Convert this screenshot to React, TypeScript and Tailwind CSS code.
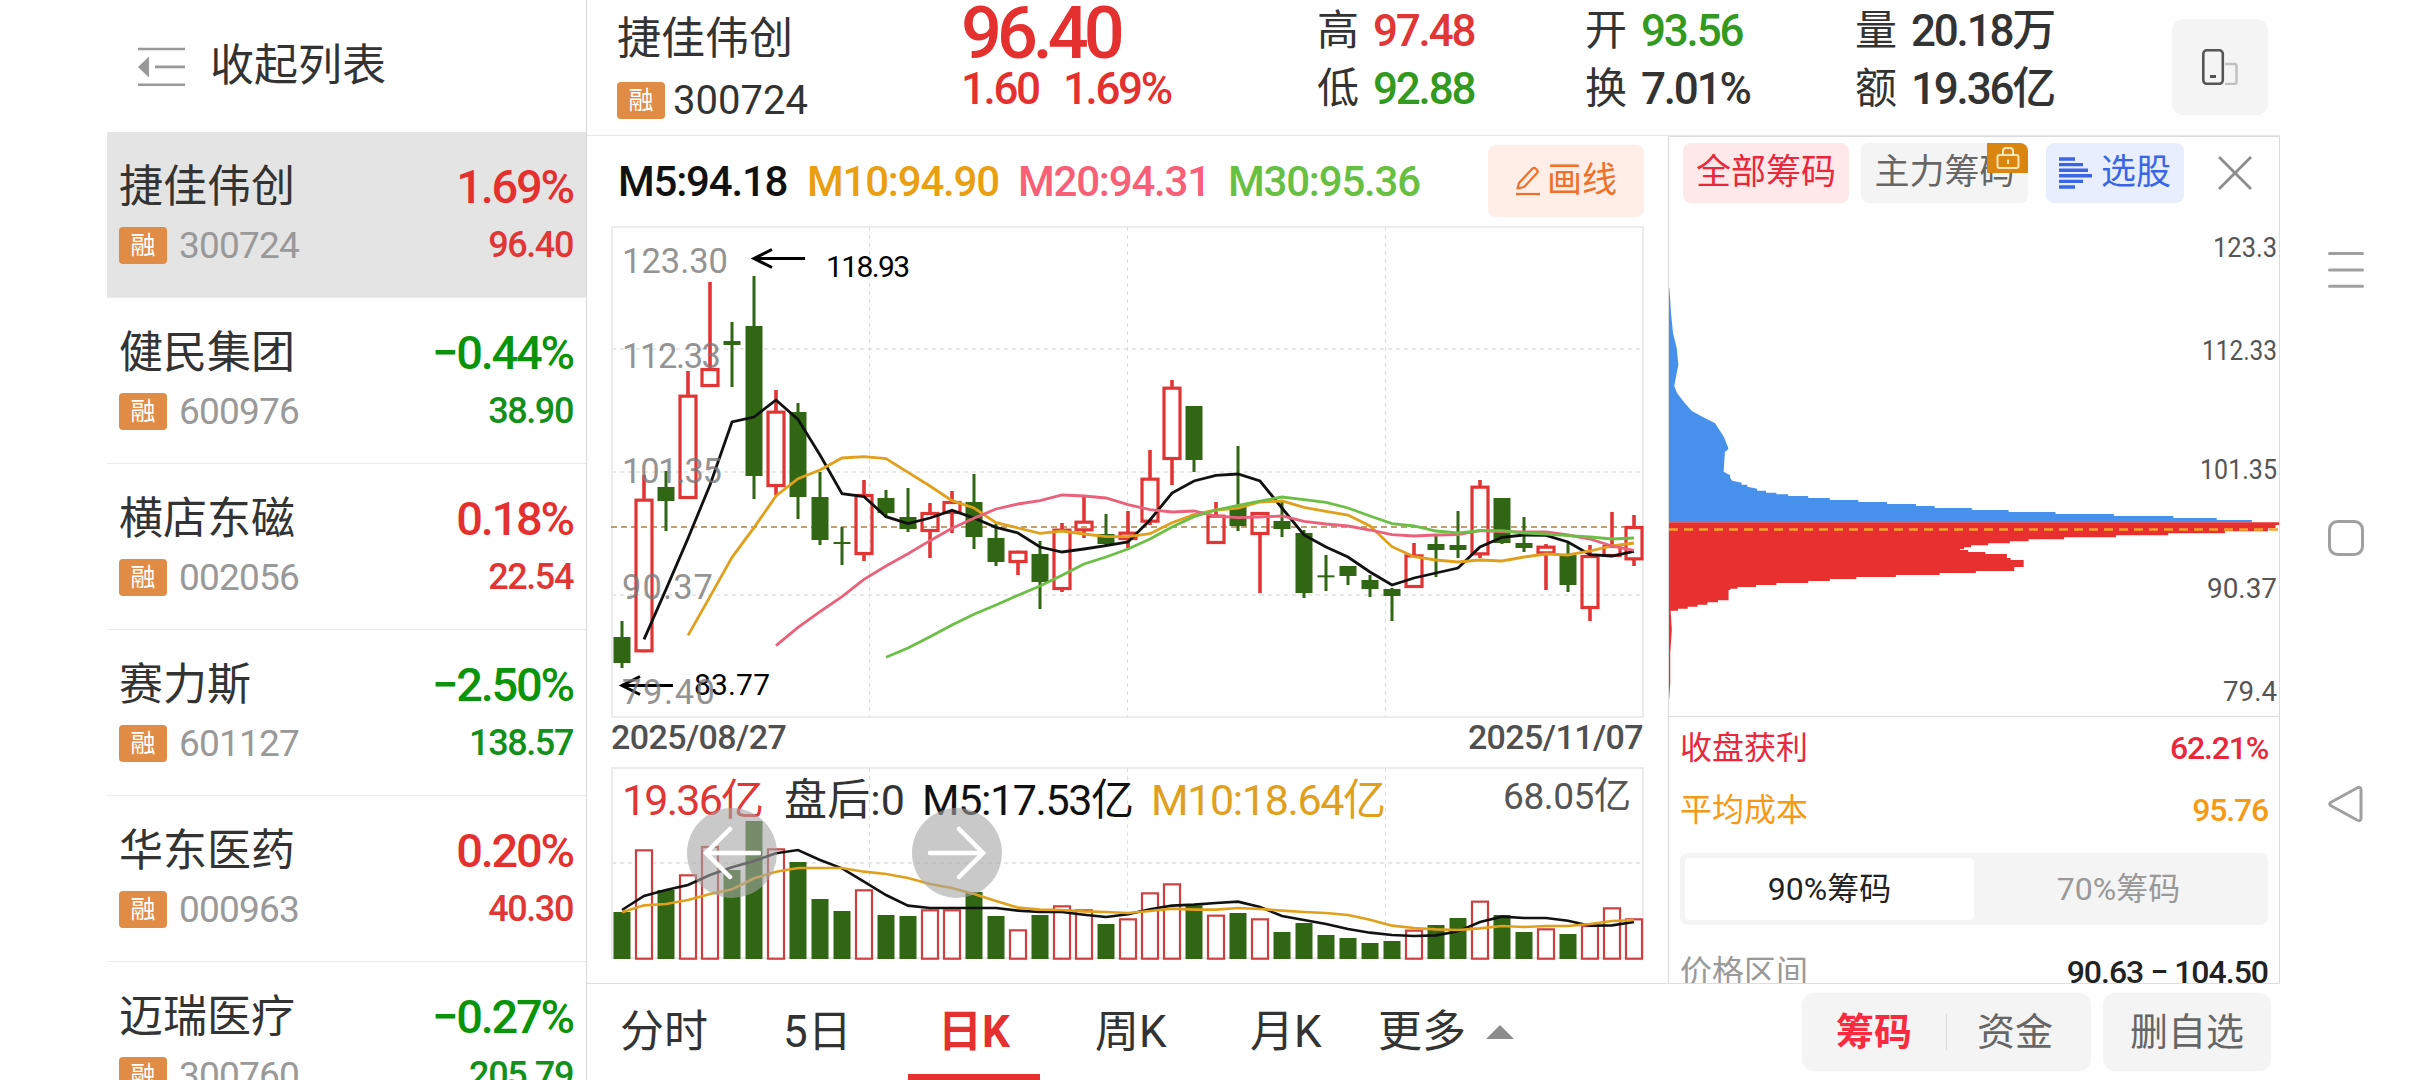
import React from 'react';
import clsx from 'clsx';

interface Stock {
  name: string;
  code: string;
  change: string;
  price: string;
  up: boolean;
}

// up, high, open/close top, open/close bottom, low, volume top
type Candle = [boolean, number, number, number, number, number];

const STOCKS: Stock[] = [
  { name: '捷佳伟创', code: '300724', change: '1.69%', price: '96.40', up: true },
  { name: '健民集团', code: '600976', change: '−0.44%', price: '38.90', up: false },
  { name: '横店东磁', code: '002056', change: '0.18%', price: '22.54', up: true },
  { name: '赛力斯', code: '601127', change: '−2.50%', price: '138.57', up: false },
  { name: '华东医药', code: '000963', change: '0.20%', price: '40.30', up: true },
  { name: '迈瑞医疗', code: '300760', change: '−0.27%', price: '205.79', up: false },
];

const U = true;
const D = false;

const CANDLES: Candle[] = [
  [D, 1203, 1251, 1329, 1344, 636], [U, 765, 836, 1297, 1297, 448], [D, 753, 801, 843, 933, 570],
  [U, 453, 524, 837, 837, 523], [U, 186, 444, 501, 501, 438], [D, 306, 363, 375, 501, 510],
  [D, 168, 318, 768, 837, 363], [U, 510, 572, 801, 826, 445], [D, 549, 576, 831, 897, 486],
  [D, 756, 831, 960, 975, 597], [D, 921, 966, 972, 1035, 633], [U, 780, 822, 1005, 1023, 568],
  [D, 810, 834, 879, 888, 645], [D, 804, 891, 927, 936, 648], [U, 849, 876, 936, 1014, 628],
  [U, 813, 843, 882, 939, 628], [D, 762, 846, 951, 987, 576], [D, 912, 954, 1026, 1038, 648],
  [U, 992, 992, 1029, 1065, 688], [D, 963, 1002, 1086, 1167, 645], [U, 909, 926, 1110, 1116, 616],
  [U, 831, 902, 934, 954, 628], [D, 882, 942, 972, 975, 672], [U, 873, 935, 960, 984, 655],
  [U, 690, 773, 908, 915, 577], [U, 480, 500, 720, 795, 550], [D, 558, 558, 720, 756, 616],
  [U, 846, 884, 972, 972, 644], [D, 678, 858, 918, 933, 639], [U, 876, 876, 945, 1119, 655],
  [D, 846, 903, 927, 951, 696], [D, 930, 939, 1119, 1134, 669], [D, 1005, 1066, 1072, 1113, 705],
  [D, 1038, 1038, 1068, 1095, 714], [D, 1065, 1080, 1107, 1131, 729], [D, 1104, 1107, 1128, 1203, 723],
  [U, 969, 1003, 1104, 1104, 689], [D, 948, 972, 990, 1071, 675], [D, 873, 975, 990, 1014, 654],
  [U, 780, 797, 1006, 1014, 602], [D, 834, 834, 969, 972, 645], [D, 891, 969, 984, 996, 696],
  [U, 972, 977, 1003, 1110, 685], [D, 966, 1005, 1095, 1116, 702], [U, 975, 1005, 1167, 1203, 675],
  [U, 876, 975, 1011, 1011, 622], [U, 885, 918, 1021, 1038, 655],
];

const MA = [
  { color: '#111111', start: 1, data: [1258, 1108, 955, 795, 606, 591, 540, 598, 705, 821, 830, 890, 911, 894, 871, 894, 922, 939, 981, 996, 987, 977, 966, 900, 819, 783, 766, 762, 783, 864, 945, 981, 1011, 1056, 1095, 1074, 1059, 1044, 981, 952, 945, 946, 966, 1004, 1008, 994] },
  { color: '#e0a01c', start: 3, data: [1246, 1130, 1012, 923, 828, 776, 750, 714, 710, 716, 757, 798, 842, 864, 908, 924, 940, 933, 942, 950, 950, 941, 908, 884, 870, 864, 846, 843, 862, 874, 885, 918, 980, 1010, 1020, 1026, 1020, 1023, 1011, 1002, 1005, 993, 978, 969] },
  { color: '#e9617a', start: 7, data: [1277, 1222, 1175, 1130, 1078, 1038, 1001, 962, 925, 895, 867, 852, 842, 825, 828, 834, 854, 869, 876, 873, 888, 893, 891, 888, 904, 912, 918, 930, 944, 948, 945, 944, 932, 935, 936, 936, 945, 957, 978, 991] },
  { color: '#6cbf45', start: 12, data: [1312, 1284, 1250, 1215, 1183, 1155, 1126, 1098, 1066, 1032, 1011, 987, 957, 921, 890, 870, 856, 843, 831, 839, 847, 864, 888, 911, 918, 933, 939, 932, 932, 939, 942, 947, 951, 957, 954] },
];

const VOL_MA = [
  { color: '#111111', start: 0, data: [630, 588, 570, 555, 525, 502, 483, 460, 450, 480, 505, 545, 585, 617, 624, 624, 624, 624, 632, 636, 636, 644, 651, 643, 628, 617, 614, 609, 605, 621, 648, 660, 672, 687, 698, 705, 708, 706, 694, 666, 650, 654, 654, 662, 677, 676, 666] },
  { color: '#e0a01c', start: 0, data: [637, 616, 612, 600, 582, 568, 535, 515, 504, 504, 504, 515, 522, 534, 552, 564, 582, 603, 623, 629, 630, 634, 636, 639, 633, 626, 629, 629, 624, 627, 632, 636, 639, 645, 659, 677, 684, 688, 690, 685, 678, 681, 678, 678, 672, 663, 660] },
];

const AXIS_LABELS: [string, number, number][] = [
  ['123.30', 273, 106],
  ['112.33', 368, 99],
  ['101.35', 483, 100],
  ['90.37', 599, 91],
  ['79.40', 704, 93],
];

const PROFILE_LABELS: [string, number, number][] = [
  ['123.3', 257, 64],
  ['112.33', 360, 75],
  ['101.35', 479, 77],
  ['90.37', 598, 70],
  ['79.4', 701, 54],
];

// cost distribution outline: smooth parts first, then [width, y] steps
const BLUE_CURVE = '23,265 27,340 32,400 41,445 45,495 40,525 35,558 42,580 60,608 78,633 105,651 135,670 157,712 167,743 167,748 159,756 156,815 172,826 172,834 177,842 200,848 200,854 214,854 214,860 238,866 238,872 260,872';
const BLUE_STEPS: [number, number][] = [
  [260, 878], [285, 883], [314, 888], [363, 894], [416, 900], [486, 906], [556, 912], [627, 918], [673, 924],
  [764, 930], [854, 936], [969, 942], [1112, 948], [1258, 954], [1364, 960], [1450, 967],
];
const RED_STEPS: [number, number][] = [
  [1517, 975], [1508, 985], [1490, 994], [1384, 1000], [1245, 1006], [1117, 1012], [990, 1018], [903, 1024],
  [857, 1030], [804, 1036], [762, 1042], [745, 1047], [735, 1050], [755, 1056], [797, 1062], [850, 1074],
  [859, 1080], [891, 1101], [868, 1113], [774, 1119], [685, 1125], [578, 1131], [481, 1137], [416, 1143],
  [363, 1149], [285, 1155], [235, 1161], [190, 1166], [172, 1170], [168, 1201], [142, 1207], [116, 1214],
  [92, 1220], [68, 1226], [44, 1232],
];

const RED = '#e13535';
const GREEN = '#306614';

const candleX = (i: number) => 622 + i * 22;
const priceY = (v: number) => 220 + v / 3;
const volumeY = (v: number) => 700 + v / 3;

const linePoints = (data: number[], start: number, toY: (v: number) => number) =>
  data.map((v, i) => `${candleX(start + i)},${toY(v)}`).join(' ');

const stepPoints = (steps: [number, number][], top: number) => {
  let y = top;
  return steps
    .map(([x, next]) => {
      const part = `${x},${y} ${x},${next}`;
      y = next;
      return part;
    })
    .join(' ');
};

const Badge: React.FC = () => (
  <span className="flex h-[37px] w-12 shrink-0 items-center justify-center rounded bg-[#e18c46] text-[25px] text-white">融</span>
);

const Sidebar: React.FC = () => (
  <aside className="flex w-[480px] shrink-0 flex-col overflow-hidden border-r border-[#d8d8d8]">
    <div className="flex h-[132px] shrink-0 items-center pl-[31px]">
      <svg className="h-[39px] w-12" viewBox="0 0 48 39" fill="none" stroke="#999" strokeWidth="2.7">
        <path d="M0 2h47M17 19.9h30M0 37.8h47" />
        <path d="M0 19.9 11 9.5v21z" fill="#999" stroke="none" />
      </svg>
      <span className="ml-[24px] text-[44px] leading-[44px] text-[#333]">收起列表</span>
    </div>
    {STOCKS.map((s, i) => (
      <div
        key={s.code}
        className={clsx(
          'flex h-[166px] shrink-0 flex-col border-b border-[#ebebeb] pl-3 pr-[13px] pt-8',
          i === 0 && 'bg-[#e4e4e4]'
        )}
      >
        <div className="flex items-center justify-between">
          <span className="text-[44px] leading-[46px] text-[#333]">{s.name}</span>
          <span className={clsx('text-[47px] leading-[46px] font-medium tracking-[-2.2px]', s.up ? 'text-[#e53030]' : 'text-[#0a940a]')}>
            {s.change}
          </span>
        </div>
        <div className="mt-[17px] flex items-center">
          <Badge />
          <span className="ml-3 text-[37px] leading-[37px] tracking-[-0.8px] text-[#999]">{s.code}</span>
          <span className={clsx('ml-auto text-[36px] leading-[37px] font-medium tracking-[-1.4px]', s.up ? 'text-[#e03636]' : 'text-[#12901a]')}>
            {s.price}
          </span>
        </div>
      </div>
    ))}
  </aside>
);

interface StatProps {
  label: string;
  value: string;
  className?: string;
}

const Stat: React.FC<StatProps> = ({ label, value, className }) => (
  <div className="flex items-center leading-[44px]">
    <span className="w-[56px] text-[42px] text-[#333]">{label}</span>
    <span className={clsx('text-[44px] font-medium tracking-[-2.2px]', className)}>{value}</span>
  </div>
);

const Header: React.FC = () => (
  <header className="flex h-[136px] shrink-0 border-b border-[#e8e8e8] pl-[30px] text-[#333]">
    <div className="w-[344px] pt-[17px]">
      <div className="text-[44px] leading-[44px]">捷佳伟创</div>
      <div className="mt-[21px] flex items-center">
        <Badge />
        <span className="ml-2 text-[40px] leading-[37px]">300724</span>
      </div>
    </div>
    <div className="w-[356px] font-medium text-[#e53030]">
      <div className="text-[72px] leading-[67px] tracking-[-5px]">96.40</div>
      <div className="flex text-[44px] leading-[44px] tracking-[-2.4px]">
        <span className="w-[102px]">1.60</span>
        <span>1.69%</span>
      </div>
    </div>
    <div className="flex w-[268px] flex-col gap-[14px] pt-[9px]">
      <Stat label="高" value="97.48" className="text-[#e03636]" />
      <Stat label="低" value="92.88" className="text-[#329a20]" />
    </div>
    <div className="flex w-[270px] flex-col gap-[14px] pt-[9px]">
      <Stat label="开" value="93.56" className="text-[#329a20]" />
      <Stat label="换" value="7.01%" />
    </div>
    <div className="flex w-[317px] flex-col gap-[14px] pt-[9px]">
      <Stat label="量" value="20.18万" />
      <Stat label="额" value="19.36亿" />
    </div>
    <button className="mt-[19px] flex h-24 w-24 items-center justify-center rounded-xl bg-[#f4f4f4]">
      <svg className="h-9 w-9" viewBox="0 0 36 36" fill="none">
        <path d="M23 15h9.500a2 2 0 0 1 2 2v16a2 2 0 0 1-2 2H23" stroke="#c0c0c0" strokeWidth="2.400" />
        <rect x="1.300" y="1.300" width="19.500" height="33.500" rx="3.500" stroke="#555" strokeWidth="2.600" />
        <path d="M8 27.500h6" stroke="#555" strokeWidth="3" />
      </svg>
    </button>
  </header>
);

const Arrow: React.FC<{ x: number; y: number }> = ({ x, y }) => (
  <path d={`M${x} ${y}h51M${x + 18} ${y - 9}l-18 9 18 9`} stroke="#000" strokeWidth="3" fill="none" />
);

const PriceChart: React.FC = () => (
  <svg className="ml-6 h-[492px] w-[1034px]" viewBox="611 226 1034 492" fontFamily="Roboto, 'Noto Sans CJK SC', sans-serif">
    <rect x="612" y="227" width="1031" height="490" fill="none" stroke="#ebebeb" strokeWidth="2" />
    <path d="M612 349h1031M612 472h1031M612 595h1031" stroke="#e8e8e8" strokeWidth="2" strokeDasharray="4 4" />
    <path d="M869.500 227v490M1127.500 227v490M1385.500 227v490" stroke="#dedede" strokeWidth="1" strokeDasharray="4 4" />
    <path d="M611 527h1032" stroke="#c0a070" strokeWidth="2" strokeDasharray="6 4" />
    {CANDLES.map(([up, high, top, bottom, low], i) => {
      const x = candleX(i);
      return up ? (
        <g key={i} stroke={RED}>
          <path d={`M${x} ${priceY(high)}V${priceY(top) + 1}M${x} ${priceY(bottom) - 1}V${priceY(low)}`} strokeWidth="3.600" />
          <rect x={x - 8} y={priceY(top) + 1.5} width="16" height={Math.max(priceY(bottom) - priceY(top) - 3, 1)} fill="none" strokeWidth="3.200" />
        </g>
      ) : (
        <g key={i} fill={GREEN}>
          <rect x={x - 1.5} y={priceY(high)} width="3" height={priceY(low) - priceY(high)} />
          <rect x={x - 8.5} y={priceY(top)} width="17" height={priceY(bottom) - priceY(top)} />
        </g>
      );
    })}
    {MA.map(m => (
      <polyline key={m.color} points={linePoints(m.data, m.start, priceY)} fill="none" stroke={m.color} strokeWidth="2.800" />
    ))}
    <Arrow x={754} y={258.5} />
    <text x="826" y="276.500" fontSize="30" textLength="84">118.93</text>
    <Arrow x={622} y={685.5} />
    <text x="694" y="695" fontSize="30" textLength="76">83.77</text>
    {AXIS_LABELS.map(([text, y, width]) => (
      <text key={text} x="622" y={y} fontSize="34.500" textLength={width} fill="#777" fillOpacity="0.800">
        {text}
      </text>
    ))}
  </svg>
);

const VolumeChart: React.FC = () => (
  <svg className="h-[194px] w-[1034px]" viewBox="611 767 1034 194" fontFamily="Roboto, 'Noto Sans CJK SC', sans-serif" fontSize="43">
    <rect x="612" y="768" width="1031" height="190" fill="none" stroke="#ebebeb" strokeWidth="2" />
    <path d="M612 863h1031" stroke="#e8e8e8" strokeWidth="2" strokeDasharray="4 4" />
    <path d="M869.500 768v190M1127.500 768v190M1385.500 768v190" stroke="#dedede" strokeWidth="1" strokeDasharray="4 4" />
    {CANDLES.map(([up, , , , , vol], i) =>
      up ? (
        <rect key={i} x={candleX(i) - 8} y={volumeY(vol) + 1} width="16" height={957.7 - volumeY(vol)} fill="#fff" stroke="#cb4141" strokeWidth="2.200" />
      ) : (
        <rect key={i} x={candleX(i) - 8.5} y={volumeY(vol)} width="17" height={959 - volumeY(vol)} fill={GREEN} />
      )
    )}
    {VOL_MA.map(m => (
      <polyline key={m.color} points={linePoints(m.data, m.start, volumeY)} fill="none" stroke={m.color} strokeWidth="2.600" />
    ))}
    <text x="622" y="815" textLength="142" fill="#e03636">19.36亿</text>
    <text x="784" y="815" textLength="121" fill="#333">盘后:0</text>
    <text x="922" y="815" textLength="212" fill="#111">M5:17.53亿</text>
    <text x="1151" y="815" textLength="235" fill="#e0a01c">M10:18.64亿</text>
    <text x="1503" y="809" textLength="128" fontSize="37" fill="#555">68.05亿</text>
  </svg>
);

const PencilIcon: React.FC = () => (
  <svg className="h-[30px] w-[26px]" viewBox="0 0 26 30" fill="none" stroke="#f0702a" strokeWidth="2.200" strokeLinejoin="round">
    <path d="M4 17 17.500 2.500a2 2 0 0 1 3 0l1.500 1.600a2 2 0 0 1 0 2.800L9 21l-6.500 1.500z" />
    <path d="M1 28h24" />
  </svg>
);

const ChartColumn: React.FC = () => (
  <section className="flex w-[1081px] shrink-0 flex-col">
    <div className="flex h-[90px] shrink-0 items-center pl-[31px] pr-6 text-[42px] font-medium tracking-[-1.2px]">
      <span className="w-[189px] text-[#111]">M5:94.18</span>
      <span className="w-[211px] text-[#ea9f10]">M10:94.90</span>
      <span className="w-[210px] text-[#fa5f78]">M20:94.31</span>
      <span className="text-[#68c043]">M30:95.36</span>
      <button className="ml-auto flex h-[72px] w-[156px] items-center justify-center gap-1.5 rounded-lg bg-[#feeee7] text-[35px] font-normal tracking-normal text-[#f0702a]">
        <PencilIcon />
        画线
      </button>
    </div>
    <PriceChart />
    <div className="flex h-[49px] shrink-0 justify-between pl-6 pr-[25px] text-[34px] leading-[39px] font-medium tracking-[-0.6px] text-[#505050]">
      <span>2025/08/27</span>
      <span>2025/11/07</span>
    </div>
    <div className="relative ml-6">
      <VolumeChart />
      <button className="absolute left-[76px] top-[41px] flex h-[90px] w-[90px] items-center justify-center rounded-full bg-[#a5a5a5]/60">
        <svg className="h-[54px] w-[58px]" viewBox="0 0 58 54" fill="none" stroke="#fff" strokeWidth="4.500" strokeLinecap="round">
          <path d="M27 3 3 27l24 24M3 27h53" />
        </svg>
      </button>
      <button className="absolute left-[301px] top-[41px] flex h-[90px] w-[90px] items-center justify-center rounded-full bg-[#a5a5a5]/60">
        <svg className="h-[54px] w-[58px]" viewBox="0 0 58 54" fill="none" stroke="#fff" strokeWidth="4.500" strokeLinecap="round">
          <path d="m31 3 24 24-24 24M55 27H2" />
        </svg>
      </button>
    </div>
  </section>
);

const ProfileChart: React.FC = () => (
  <svg className="h-[513px] w-[610px] shrink-0" viewBox="1669 203 610 513" fontFamily="Roboto, 'Noto Sans CJK SC', sans-serif">
    <g transform="translate(1660 200) scale(0.40816 0.33333)">
      <polygon points={`22,265 ${BLUE_CURVE} ${stepPoints(BLUE_STEPS, 872)} 22,967`} fill="#4791ed" />
      <polygon points={`22,967 ${stepPoints(RED_STEPS, 967)} 26,1232 29,1290 25,1360 25,1450 22,1505`} fill="#e83030" />
    </g>
    <path d="M1669 529.500h610" stroke="#f5a52a" strokeWidth="2.500" strokeDasharray="9 6" />
    {PROFILE_LABELS.map(([text, y, width]) => (
      <text key={text} x={2277 - width} y={y} fontSize="27.500" textLength={width} lengthAdjust="spacingAndGlyphs" fill="#555">
        {text}
      </text>
    ))}
  </svg>
);

const ChipPanel: React.FC = () => (
  <section className="flex w-[612px] shrink-0 flex-col overflow-hidden border-x border-t border-[#dcdcdc]">
    <div className="flex h-[66px] shrink-0 items-end pl-[14px] text-[35px]">
      <button className="flex h-[60px] w-[166px] items-center justify-center rounded-lg bg-[#ffe8ea] text-[#e8283c]">全部筹码</button>
      <button className="relative ml-3 flex h-[60px] w-[167px] items-center justify-center rounded-lg bg-[#f4f4f4] text-[#666]">
        主力筹码
        <span className="absolute right-0 top-0 flex h-[30px] w-[41px] items-center justify-center rounded-tr-lg bg-[#da850f]">
          <svg className="h-[24px] w-[24px]" viewBox="0 0 24 24" fill="none" stroke="#ffe6b8" strokeWidth="2">
            <rect x="1.500" y="9" width="21" height="13" rx="2" />
            <path d="M7 9V5a3 3 0 0 1 3-3h4a3 3 0 0 1 3 3v4M12 13.500v4.500" />
          </svg>
        </span>
      </button>
      <button className="ml-[18px] flex h-[60px] w-[138px] items-center justify-center gap-2 rounded-lg bg-[#e8eefe] text-[#3a66e6]">
        <svg className="h-8 w-[34px]" viewBox="0 0 34 32" stroke="#3a66e6" strokeWidth="3.400">
          <path d="M0 2h16M0 7.600h24M0 13.200h29M0 18.800h33M0 24.400h24M0 30h16" />
        </svg>
        选股
      </button>
      <svg className="mb-[13px] ml-[34px] h-[34px] w-[34px]" viewBox="0 0 34 34" stroke="#8c8c8c" strokeWidth="2.800">
        <path d="m1 1 32 32M33 1 1 33" />
      </svg>
    </div>
    <ProfileChart />
    <div className="flex shrink-0 flex-col border-t border-[#dcdcdc] px-[11px] text-[32px]">
      <div className="flex h-[62px] items-center justify-between text-[#e8283c]">
        <span>收盘获利</span>
        <span className="font-medium tracking-[-1.2px]">62.21%</span>
      </div>
      <div className="flex h-[62px] items-center justify-between text-[#f59a16]">
        <span>平均成本</span>
        <span className="font-medium tracking-[-1.2px]">95.76</span>
      </div>
      <div className="mt-[12px] flex h-[72px] rounded-lg bg-[#f4f4f4] p-[5px]">
        <button className="w-[289px] rounded bg-white text-[#222]">90%筹码</button>
        <button className="flex-1 text-[#999]">70%筹码</button>
      </div>
      <div className="mt-[26px] flex items-center justify-between leading-[42px]">
        <span className="text-[#999]">价格区间</span>
        <span className="font-medium tracking-[-1px] text-[#222]">90.63 − 104.50</span>
      </div>
    </div>
  </section>
);

const BottomBar: React.FC = () => (
  <footer className="flex h-[97px] shrink-0 items-center border-t border-[#dedede] text-[44px] text-[#333]">
    <div className="flex h-full w-[1215px] items-center pl-[33px]">
      <span className="w-[163px]">分时</span>
      <span className="w-[125px]">5日</span>
      <span className="relative flex h-full w-[132px] items-center justify-center font-bold text-[#e53030]">
        日K
        <i className="absolute bottom-0 left-0 h-1.5 w-full bg-[#e53030]" />
      </span>
      <span className="ml-[55px] w-[155px]">周K</span>
      <span className="w-[128px]">月K</span>
      <span>更多</span>
      <svg className="ml-5 h-[14px] w-7" viewBox="0 0 28 14">
        <path d="M14 0 28 14H0z" fill="#8c8c8c" />
      </svg>
    </div>
    <div className="flex h-[78px] w-[289px] items-center rounded-xl bg-[#f4f4f4] text-[38px]">
      <span className="w-36 text-center font-bold text-[#fa2a40]">筹码</span>
      <i className="h-9 w-px bg-[#dcdcdc]" />
      <span className="flex-1 pr-2 text-center text-[#666]">资金</span>
    </div>
    <div className="ml-3 flex h-[78px] w-[168px] items-center justify-center rounded-xl bg-[#f4f4f4] text-[38px] text-[#666]">删自选</div>
  </footer>
);

const SystemNav: React.FC = () => (
  <nav className="flex w-[132px] shrink-0 flex-col items-center">
    <svg className="mt-[251px] h-[38px] w-[38px]" viewBox="0 0 38 38" fill="none" stroke="#a0a0a0" strokeWidth="3" strokeLinecap="round">
      <path d="M2.500 2.500h33M2.500 19h33M2.500 35.300h33" />
    </svg>
    <svg className="mt-[230px] h-[38px] w-[38px]" viewBox="0 0 38 38" fill="none" stroke="#a0a0a0" strokeWidth="3">
      <rect x="2.500" y="2.500" width="33" height="33" rx="8" />
    </svg>
    <svg className="mt-[228px] h-[38px] w-[38px]" viewBox="0 0 38 38" fill="none" stroke="#a0a0a0" strokeWidth="3" strokeLinejoin="round">
      <path d="M3.500 17.500 30 3q4-2 4 2v28q0 4-4 2L3.500 20.500q-1.500-1.500 0-3z" />
    </svg>
  </nav>
);

const App: React.FC = () => (
  <div className="flex h-[1080px] w-[2412px] overflow-hidden bg-[#fefefe] pl-[107px] font-[Roboto,'Noto_Sans_CJK_SC',sans-serif]">
    <Sidebar />
    <main className="flex w-[1693px] shrink-0 flex-col">
      <Header />
      <div className="flex h-[847px] shrink-0 overflow-hidden">
        <ChartColumn />
        <ChipPanel />
      </div>
      <BottomBar />
    </main>
    <SystemNav />
  </div>
);

export default App;
